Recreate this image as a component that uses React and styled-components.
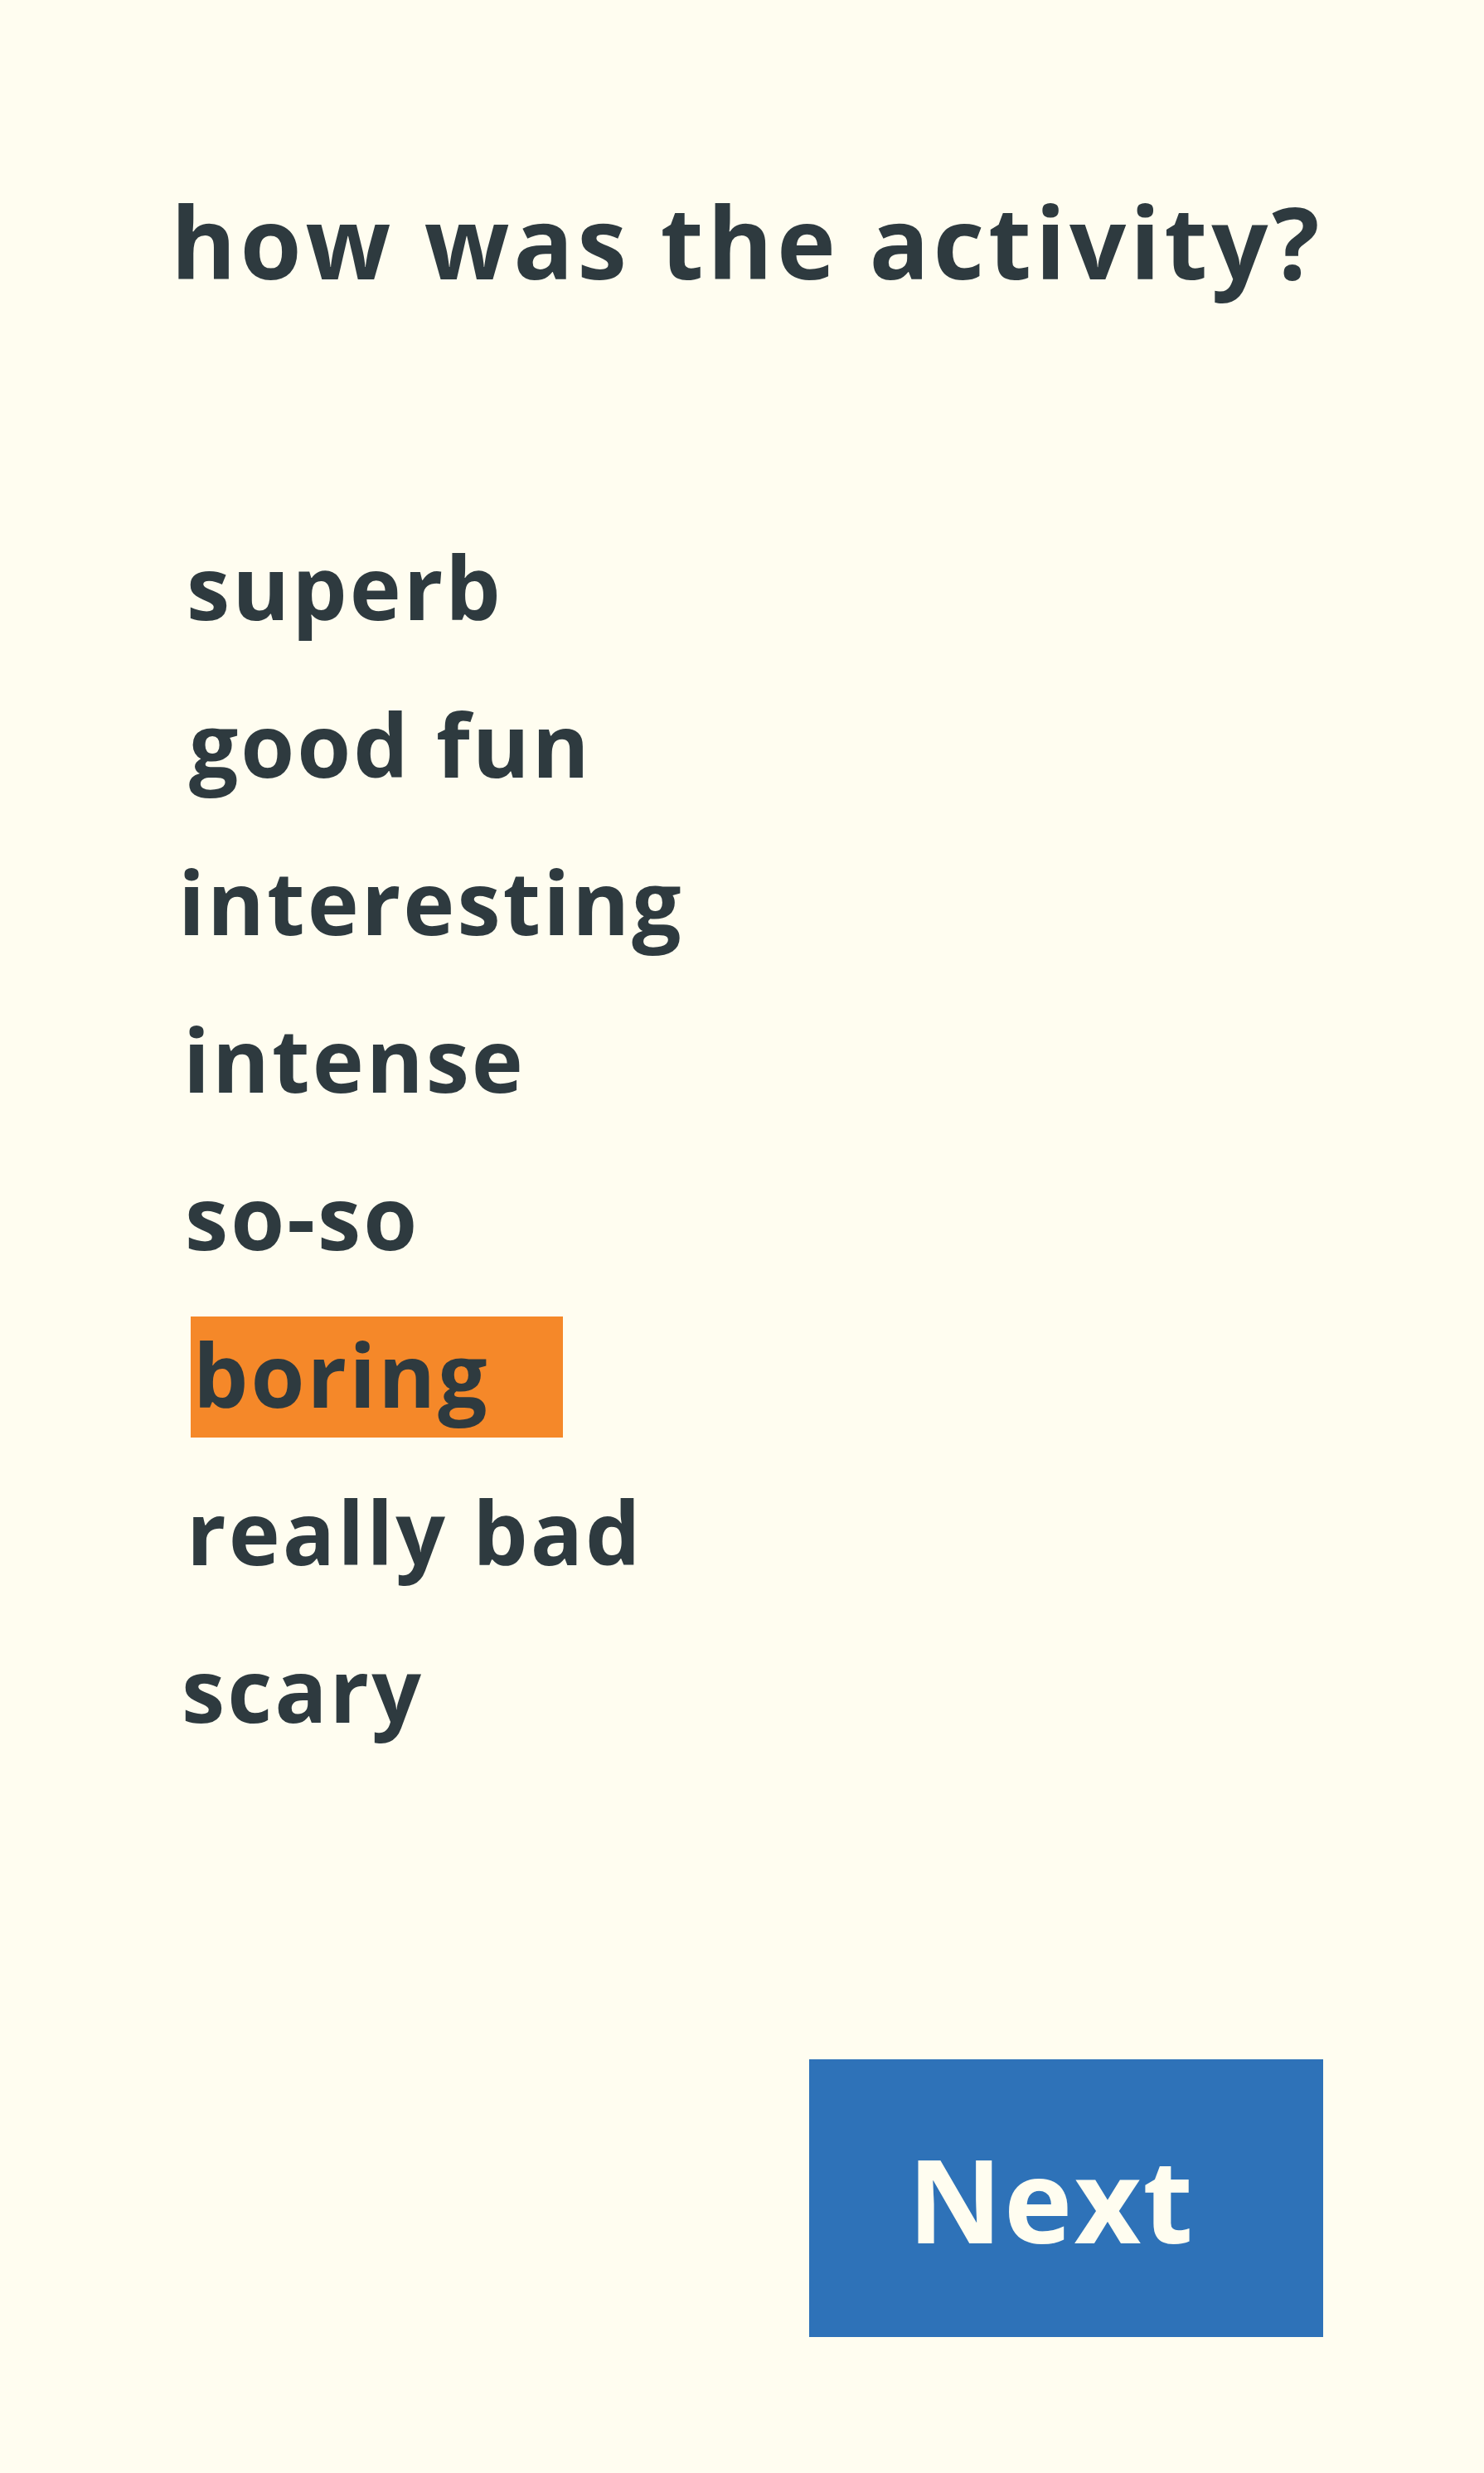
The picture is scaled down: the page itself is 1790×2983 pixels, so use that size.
import { createGlobalStyle, styled } from "styled-components";

const GlobalStyle = createGlobalStyle`
    html, body {
        margin: 0;
        padding: 0;
        background-color: #fffdf0;
    }
    body {
        font-family: "Open Sans", "Liberation Sans", sans-serif;
        color: #2e3a3f;
    }
`;

const Page = styled.div`
    min-height: 2983px;
    display: flex;
    flex-direction: column;
    padding-top: 231px;
    box-sizing: border-box;
`;
const Title = styled.h1`
    margin: 0;
    padding-left: 12px;
    font-size: 120px;
    line-height: 1;
    font-weight: 700;
    letter-spacing: 4.7px;
    text-align: center;
`;
const Options = styled.ul`
    list-style: none;
    margin: 287px 0 0;
    padding: 0 0 0 220px;
    display: flex;
    flex-direction: column;
    gap: 44px;
`;
const Option = styled.li`
    width: 449px;
    height: 146px;
    margin-left: ${(p) => p.$shift}px;
    padding-left: ${(p) => (p.$selected ? 3 : 0)}px;
    box-sizing: border-box;
    font-size: 105px;
    line-height: 140px;
    font-weight: 700;
    letter-spacing: 3px;
    white-space: nowrap;
    background-color: ${(p) => (p.$selected ? "#f58829" : "transparent")};
    cursor: pointer;
`;
const Footer = styled.div`
    display: flex;
    justify-content: flex-end;
    padding: 370px 194px 0 0;
`;
const NextButton = styled.button`
    width: 620px;
    height: 335px;
    border: none;
    border-radius: 0;
    background-color: #2e72b8;
    color: #fffdf0;
    font-family: "Open Sans", "Liberation Sans", sans-serif;
    font-size: 140px;
    font-weight: 700;
    letter-spacing: 2px;
    padding: 0 36px 0 0;
    cursor: pointer;
`;

const options = [
    { label: "superb", shift: 5 },
    { label: "good fun", shift: 8 },
    { label: "interesting", shift: -5 },
    { label: "intense", shift: 1 },
    { label: "so-so", shift: 3 },
    { label: "boring", shift: 10, selected: true },
    { label: "really bad", shift: 5 },
    { label: "scary", shift: -1 },
];

export default function App() {
    return (
        <>
            <GlobalStyle />
            <Page>
                <Title>how was the activity?</Title>
                <Options>
                    {options.map((o) => (
                        <Option key={o.label} $shift={o.shift} $selected={o.selected}>
                            {o.label}
                        </Option>
                    ))}
                </Options>
                <Footer>
                    <NextButton>Next</NextButton>
                </Footer>
            </Page>
        </>
    );
}
